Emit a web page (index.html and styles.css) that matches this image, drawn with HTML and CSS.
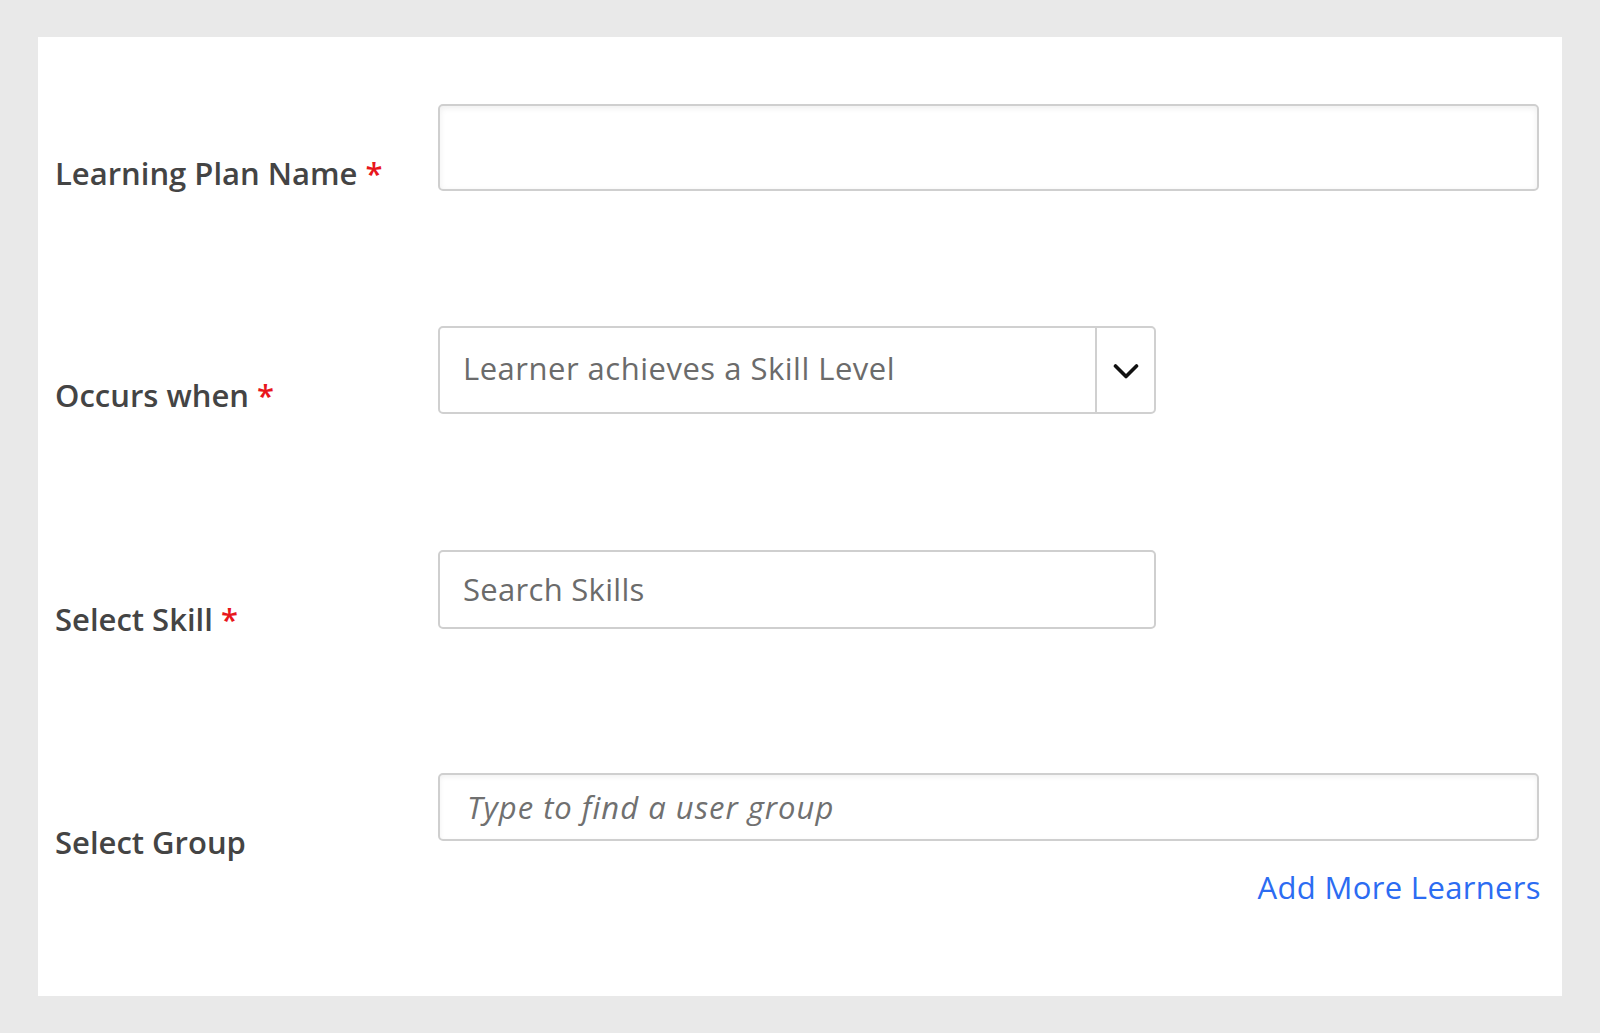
FILE: index.html
```html
<!DOCTYPE html>
<html lang="en">
<head>
<meta charset="utf-8">
<title>Learning Plan</title>
<link rel="stylesheet" href="styles.css">
</head>
<body>
<div class="panel">
  <div class="row">
    <label class="label">Learning Plan Name <span class="req">*</span></label>
    <div class="field">
      <div class="input input-name"></div>
    </div>
  </div>
  <div class="row row-occurs">
    <label class="label">Occurs when <span class="req">*</span></label>
    <div class="field">
      <div class="select">
        <span class="select-text">Learner achieves a Skill Level</span>
        <span class="select-btn">
          <svg width="26" height="17" viewBox="0 0 26 17"><path d="M2.5 3 L13 13.5 L23.5 3" fill="none" stroke="#111" stroke-width="3.6" stroke-linecap="round" stroke-linejoin="round"/></svg>
        </span>
      </div>
    </div>
  </div>
  <div class="row row-skill">
    <label class="label">Select Skill <span class="req">*</span></label>
    <div class="field">
      <div class="input input-skill"><span class="value">Search Skills</span></div>
    </div>
  </div>
  <div class="row row-group">
    <label class="label">Select Group</label>
    <div class="field">
      <div class="input input-group"><span class="placeholder">Type to find a user group</span></div>
      <div class="link-row"><a class="link" href="#">Add More Learners</a></div>
    </div>
  </div>
</div>
</body>
</html>
```

FILE: styles.css
```css
html, body {
  margin: 0;
  padding: 0;
  background: #e9e9e9;
}
body {
  padding: 37px 38px;
  font-family: "Open Sans", Lato, Arial, sans-serif;
}
.panel {
  background: #fff;
  height: 959px;
  box-sizing: border-box;
  padding: 67px 23px 0 17px;
}
.row {
  display: grid;
  grid-template-columns: 383px 1fr;
  align-items: start;
}
.row-occurs { margin-top: 135px; }
.row-skill { margin-top: 136px; }
.row-group { margin-top: 144px; }
.label {
  box-sizing: border-box;
  height: 60px;
  padding-top: 49px;
  line-height: 40px;
  font-size: 31px;
  font-weight: 600;
  color: #444;
  white-space: nowrap;
}
.req {
  color: #e8161c;
}
.input {
  box-sizing: border-box;
  border: 2px solid #cfcfcf;
  border-radius: 5px;
  display: flex;
  align-items: center;
  padding-left: 23px;
  color: #6b6b6b;
  font-size: 31px;
}
.input-name {
  height: 87px;
  box-shadow: inset 0 2px 6px rgba(0,0,0,0.07);
}
.input-skill {
  width: 718px;
  height: 79px;
  padding-bottom: 2px;
  letter-spacing: 0.3px;
}
.input-group {
  height: 68px;
  padding-left: 27px;
  box-shadow: inset 0 2px 5px rgba(0,0,0,0.06);
}
.placeholder {
  font-style: italic;
  color: #707070;
  letter-spacing: 1px;
}
.select {
  box-sizing: border-box;
  width: 718px;
  height: 88px;
  border: 2px solid #d0d0d0;
  border-radius: 5px;
  display: flex;
  align-items: stretch;
}
.select-text {
  flex: 1;
  display: flex;
  align-items: center;
  padding-left: 23px;
  padding-bottom: 4px;
  font-size: 31px;
  letter-spacing: 0.5px;
  color: #6b6b6b;
}
.select-btn {
  width: 57px;
  border-left: 2px solid #d0d0d0;
  display: flex;
  align-items: center;
  justify-content: center;
  padding-top: 2px;
}
.link-row {
  display: flex;
  justify-content: flex-end;
  margin-top: 26px;
  margin-right: -2px;
}
.link {
  font-size: 31px;
  letter-spacing: 0.35px;
  color: #2c6cf2;
  text-decoration: none;
  line-height: 40px;
}
```
